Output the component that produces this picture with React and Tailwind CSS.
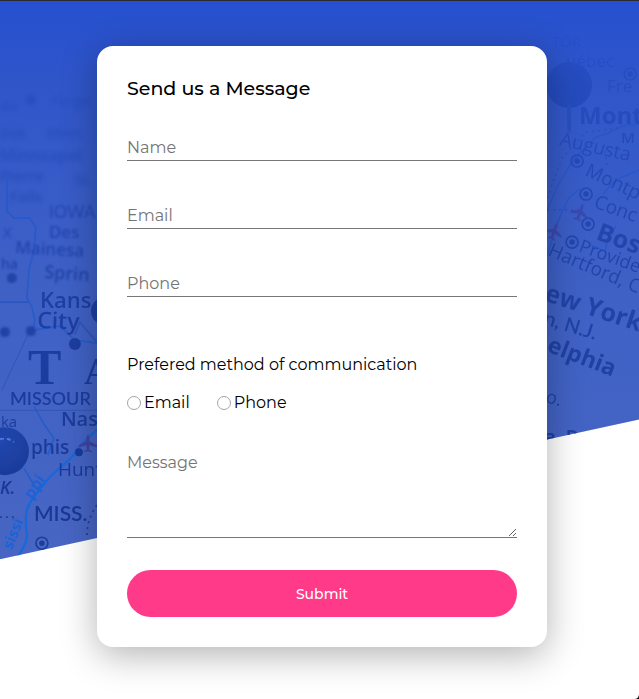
const fields = [
  { id: 'name', label: 'Name', type: 'text' },
  { id: 'email', label: 'Email', type: 'email' },
  { id: 'phone', label: 'Phone', type: 'tel' },
];

function Town({ x, y, r = 6 }) {
  return (
    <g>
      <circle cx={x} cy={y} r={r} fill="none" stroke="#1b3b96" strokeWidth="1.6" />
      <circle cx={x} cy={y} r={r / 2.2} fill="#1b3b96" />
    </g>
  );
}

function Plane({ x, y, angle = 0 }) {
  return (
    <path
      transform={`translate(${x} ${y}) rotate(${angle})`}
      d="M0-9 L1.5-6 1.5-2 9 2 9 4 1.5 2 1 6 4 8 4 9 0 8 -4 9 -4 8 -1 6 -1.5 2 -9 4 -9 2 -1.5-2 -1.5-6Z"
      fill="#463f95"
    />
  );
}

function MapBackdrop() {
  return (
    <svg
      aria-hidden="true"
      viewBox="0 0 639 559"
      preserveAspectRatio="xMidYMid slice"
      className="h-full w-full"
    >
      <defs>
        <linearGradient id="tint" x1="0" y1="0" x2="0" y2="1">
          <stop offset="0" stopColor="#2650d0" />
          <stop offset="0.15" stopColor="#2951cb" stopOpacity="0.8" />
          <stop offset="0.5" stopColor="#2b54cb" stopOpacity="0.35" />
          <stop offset="1" stopColor="#2b54cb" stopOpacity="0.05" />
        </linearGradient>
        <radialGradient id="pin" cx="0.4" cy="0.3" r="0.8">
          <stop offset="0" stopColor="#2145a8" />
          <stop offset="1" stopColor="#15358f" />
        </radialGradient>
        <filter id="soft"><feGaussianBlur stdDeviation="2" /></filter>
        <filter id="mid"><feGaussianBlur stdDeviation="1.2" /></filter>
        <filter id="fine"><feGaussianBlur stdDeviation="0.7" /></filter>
      </defs>
      <rect width="639" height="559" fill="#4967c3" />

      <g filter="url(#soft)" fill="#2040a0" fontFamily="Open Sans, sans-serif" fontWeight="600">
        <circle cx="31" cy="100" r="5" />
        <text x="52" y="106" fontSize="14">Fargo</text>
        <text x="1" y="111" fontSize="12">Bis</text>
        <text x="0" y="138" fontSize="14">Dak</text>
        <text x="47" y="138" fontSize="14">Minn</text>
        <text x="0" y="161" fontSize="16">Minneapol</text>
        <text x="0" y="181" fontSize="15">Pierre</text>
        <text x="74" y="185" fontSize="15">St.</text>
        <text x="10" y="202" fontSize="15">Falls</text>
      </g>

      <g filter="url(#fine)" fill="none" stroke="#275eca" strokeWidth="1.8">
        <path d="M7 178V211L14 218H30L36 227 34 250 29 270 27 298 32 307 35 320 33 330 60 326 75 340 97 343" />
        <path d="M75 334L80 322 97 342M0 302H28" stroke="#2f57b9" />
        <path d="M34 406L44 424 54 438 48 455M24 468L36 488" />
        <path d="M97 430Q84 440 78 449T61 467 43 485 31 501 26 518 27 535 17 558" stroke="#196adc" strokeWidth="2.5" />
        <path d="M30 330L2 390M0 410H97" stroke="#3455ad" strokeWidth="1" />
        <path d="M0 517H18M97 505Q87 519 87 535" stroke="#203f98" strokeDasharray="2 4" />
      </g>

      <g filter="url(#mid)" fill="#1b3b94" fontFamily="Open Sans, sans-serif">
        <text x="49" y="218" fontSize="17" fontFamily="Lato, sans-serif">IOWA</text>
        <text x="49" y="238" fontSize="17" fontWeight="600">Des</text>
        <text x="15" y="253" fontSize="17" fontWeight="600" transform="rotate(3 15 253)">Mainesa</text>
        <text x="3" y="238" fontSize="15">X</text>
        <text x="1" y="269" fontSize="14" fontWeight="600">ha</text>
        <text x="44" y="278" fontSize="18" fontWeight="600" transform="rotate(4 44 278)">Sprin</text>
        <circle cx="12" cy="278" r="5" />
        <circle cx="5" cy="332" r="5" />
        <circle cx="31" cy="331" r="5" />
      </g>

      <g filter="url(#fine)" fill="#183690" fontFamily="Open Sans, sans-serif">
        <text x="40" y="308" fontSize="22" fontWeight="600">Kans</text>
        <text x="37" y="328" fontSize="23" fontWeight="600" transform="rotate(2 37 328)">City</text>
        <text x="28" y="384" fontSize="50" fontWeight="700" fontFamily="Liberation Serif, serif">T</text>
        <text x="84" y="384" fontSize="38" fontWeight="700" fontFamily="Liberation Serif, serif">A</text>
        <text x="10" y="405" fontSize="18" fontWeight="600" fontFamily="Lato, sans-serif">MISSOUR</text>
        <text x="61" y="426" fontSize="20" fontWeight="600">Nash</text>
        <text x="1" y="427" fontSize="15">ka</text>
        <text x="31" y="454" fontSize="19" fontWeight="600">phis</text>
        <text x="58" y="476" fontSize="19">Hunts</text>
        <text x="0" y="494" fontSize="18" fontWeight="600" fontStyle="italic">K.</text>
        <text x="34" y="521" fontSize="21" fontWeight="600" fontFamily="Lato, sans-serif">MISS.</text>
        <text x="12" y="550" fontSize="15" fontWeight="700" fill="#1c64d5" transform="rotate(-68 12 550)">sissi</text>
        <text x="32" y="500" fontSize="16" fontWeight="700" fill="#1c64d5" transform="rotate(-56 32 500)">ppi</text>
        <circle cx="75" cy="344" r="6" />
        <circle cx="79" cy="452" r="4" />
        <circle cx="105" cy="311" r="14" />
        <Town x={42} y={543} />
        <Plane x={88} y={443} />
      </g>

      <circle cx="5" cy="451" r="24" fill="url(#pin)" filter="url(#fine)" />
      <path d="M0 439Q8 437 14 442" fill="none" stroke="#5d7dd6" strokeWidth="2" strokeDasharray="4 3" filter="url(#fine)" />

      <g filter="url(#fine)" fill="none" stroke="#275cc8" strokeWidth="1.5">
        <path d="M547 210L558 185 570 165 583 149 596 137 608 133 622 126 639 124" />
        <path d="M547 256L558 221 568 199 580 188M590 245L605 251 608 238 616 226M603 194L615 180 639 170" />
        <path d="M547 210H580M547 198L562 158 586 132 620 128M607 165L604 145" stroke="#2849a9" strokeDasharray="2 4" />
      </g>
      <circle cx="569" cy="85" r="23" fill="#183891" filter="url(#fine)" />
      <path d="M568 105L570 132" stroke="#28489f" strokeWidth="6" filter="url(#mid)" />
      <g filter="url(#fine)" fill="#1b3b94" fontFamily="Open Sans, sans-serif">
        <text x="552" y="47" fontSize="15">TOR</text>
        <text x="566" y="67" fontSize="17">uébec</text>
        <text x="607" y="92" fontSize="17">Fre</text>
        <text x="579" y="124" fontSize="24" fontWeight="700">Mont</text>
        <text x="621" y="143" fontSize="15" fontWeight="600">M</text>
        <text x="559" y="145" fontSize="19" transform="rotate(13 559 145)">Augusta</text>
        <text x="584" y="175" fontSize="19" transform="rotate(25 584 175)">Montp</text>
        <text x="593" y="207" fontSize="19" transform="rotate(20 593 207)">Conc</text>
        <text x="595" y="239" fontSize="25" fontWeight="700" transform="rotate(20 595 239)">Bos</text>
        <text x="578" y="251" fontSize="18" transform="rotate(20 578 251)">Provide</text>
        <text x="547" y="255" fontSize="19" transform="rotate(23 547 255)">Hartford, C</text>
        <text x="524" y="294" fontSize="25" fontWeight="700" transform="rotate(18 524 294)">New York</text>
        <text x="543" y="324" fontSize="20" fontWeight="600" fontFamily="Lato, sans-serif" transform="rotate(17 543 324)">n, N.J.</text>
        <text x="546" y="351" fontSize="23" fontWeight="700" transform="rotate(21 546 351)">elphia</text>
        <text x="545" y="402" fontSize="18" transform="rotate(15 545 402)">o.</text>
        <text x="545" y="443" fontSize="18" fontWeight="700">a, D.</text>
        <Town x={630} y={74} />
        <Town x={577} y={161} />
        <Town x={586} y={194} />
        <Town x={588} y={224} />
        <Town x={572} y={242} />
        <Plane x={580} y={212} angle={20} />
        <Plane x={554} y={231} angle={20} />
      </g>
      <rect width="639" height="559" fill="url(#tint)" />
    </svg>
  );
}

export default function App() {
  return (
    <div className="relative isolate min-h-screen overflow-hidden bg-white pt-[46px] pr-4 pb-[52px] pl-[21px] font-['Montserrat','Inter',sans-serif] text-base leading-6 text-black">
      <div className="absolute inset-x-0 top-0 -z-10 h-[80vh] [clip-path:polygon(0_0,100%_0,100%_75%,0_100%)]">
        <MapBackdrop />
      </div>
      <div className="absolute inset-x-0 top-0 h-px bg-[#292a30]" />
      <svg aria-hidden="true" viewBox="0 0 5 5" className="absolute right-0 bottom-0 h-[5px] w-[5px]">
        <path d="M5 0Q5 5 0 5H5Z" fill="#111" />
      </svg>

      <form
        onSubmit={(event) => event.preventDefault()}
        className="mx-auto w-full max-w-[450px] rounded-2xl bg-white p-[30px] shadow-[0_8px_36px_rgba(0,0,0,0.3)]"
      >
        <h1 className="mb-8 text-[19px] leading-[25px] font-medium">Send us a Message</h1>
        <div className="grid gap-10">
          {fields.map(({ id, label, type }) => (
            <input
              key={id}
              id={id}
              name={id}
              type={type}
              aria-label={label}
              placeholder={label}
              className="block h-7 w-full border-b border-[#777] bg-transparent pt-0.5 outline-none placeholder:text-[#757575]"
            />
          ))}
        </div>

        <fieldset className="mt-14">
          <legend className="mb-3.5">Prefered method of communication</legend>
          <div className="flex gap-[27px]">
            {['Email', 'Phone'].map((method) => (
              <label key={method} className="flex items-center gap-[3px]">
                <input
                  type="radio"
                  name="method"
                  value={method}
                  className="h-3.5 w-3.5 appearance-none rounded-full border border-[#a5a5a5] bg-white checked:border-4 checked:border-[#ff3888]"
                />
                {method}
              </label>
            ))}
          </div>
        </fieldset>

        <textarea
          name="message"
          aria-label="Message"
          placeholder="Message"
          className="mt-9 block h-[87px] w-full resize border-b border-[#777] bg-transparent outline-none placeholder:text-[#757575]"
        />
        <button
          type="submit"
          className="mt-8 h-[47px] w-full rounded-full bg-[#ff3a89] text-sm font-medium text-white"
        >
          Submit
        </button>
      </form>
    </div>
  );
}
